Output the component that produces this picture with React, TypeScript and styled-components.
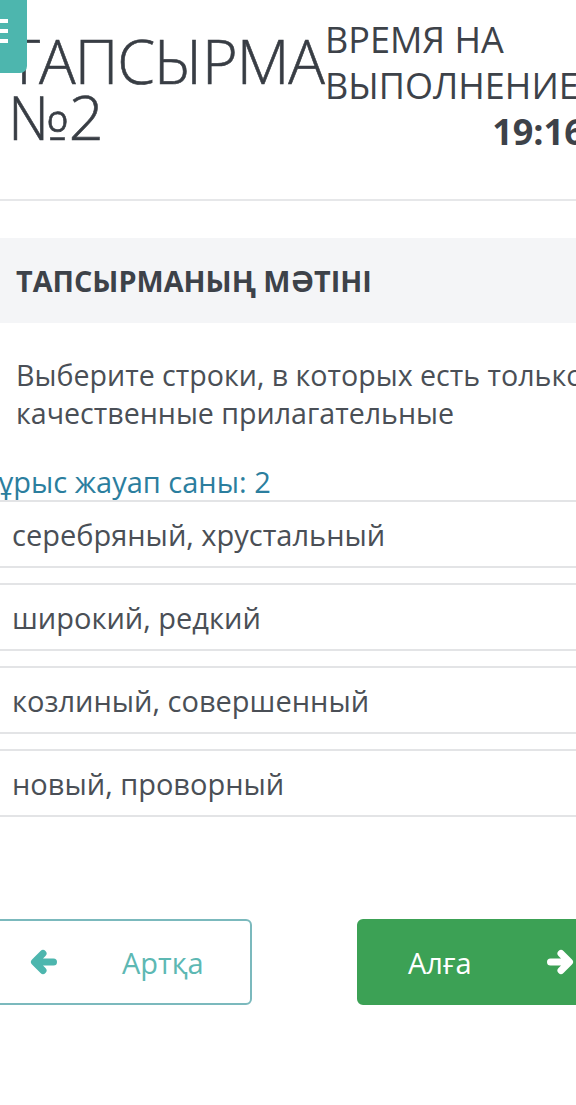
import styled, { createGlobalStyle } from "styled-components";

const GlobalStyle = createGlobalStyle`
  html, body {
    margin: 0;
    padding: 0;
    background: #ffffff;
    overflow: hidden;
  }
  body {
    font-family: "Open Sans", "Noto Sans", sans-serif;
    color: #3d4249;
  }
`;

// Styled
const Page = styled.div`
  position: relative;
  width: 576px;
  height: 1105px;
  overflow: hidden;
`;

const MenuTab = styled.div`
  position: absolute;
  top: 0;
  left: 0;
  width: 27px;
  height: 73px;
  background: #4db6ae;
  border-radius: 0 0 7px 0;
  display: flex;
  flex-direction: column;
  gap: 6px;
  padding-top: 19px;
  box-sizing: border-box;
  z-index: 2;
`;

const MenuLine = styled.span`
  display: block;
  width: 8px;
  height: 4px;
  background: #ffffff;
`;

const Header = styled.header`
  display: flex;
  align-items: flex-start;
  padding: 33px 0 0 8px;
  height: 201px;
  box-sizing: border-box;
  border-bottom: 2px solid #e6e7e9;
`;

const Title = styled.h1`
  margin: 0;
  width: 317px;
  flex-shrink: 0;
  font-size: 61px;
  font-weight: 300;
  line-height: 56px;
  color: #383d44;
  letter-spacing: -1px;
  -webkit-text-stroke: 0.6px #383d44;
`;

const Timer = styled.div`
  font-size: 36px;
  font-weight: 400;
  line-height: 46px;
  color: #3d4249;
  white-space: nowrap;
  margin-top: -16px;
`;

const TimerValue = styled.div`
  font-weight: 700;
  text-align: right;
  margin-right: -6px;
`;

const SectionHead = styled.div`
  margin-top: 37px;
  height: 85px;
  background: #f4f5f7;
  display: flex;
  align-items: center;
  padding-left: 16px;
  font-size: 28.8px;
  font-weight: 700;
  color: #3d4249;
`;

const Question = styled.p`
  margin: 33px 0 0 16px;
  font-size: 28.6px;
  line-height: 38px;
  color: #4a4f56;
  white-space: nowrap;
`;

const Hint = styled.div`
  margin: 33px 0 0 -21px;
  font-size: 29px;
  line-height: 34px;
  color: #2b7e9e;
`;

const Options = styled.div`
  display: flex;
  flex-direction: column;
  gap: 15px;
  margin-top: 1px;
`;

const Option = styled.div`
  height: 68px;
  box-sizing: border-box;
  border-top: 2px solid #e3e4e6;
  border-bottom: 2px solid #e3e4e6;
  display: flex;
  align-items: center;
  padding-left: 12px;
  font-size: 29px;
  color: #4a4f56;
`;

const Nav = styled.div`
  display: flex;
  margin-top: 102px;
  margin-left: -20px;
  gap: 105px;
`;

const NavButton = styled.button<{ $primary?: boolean }>`
  width: 272px;
  height: 86px;
  flex-shrink: 0;
  box-sizing: border-box;
  border-radius: 6px;
  border: 2px solid ${(p) => (p.$primary ? "#3ca155" : "#7bb9bd")};
  background: ${(p) => (p.$primary ? "#3ca155" : "#ffffff")};
  color: ${(p) => (p.$primary ? "#ffffff" : "#5db8b3")};
  font-family: "Open Sans", "Noto Sans", sans-serif;
  font-size: 29px;
  display: flex;
  align-items: center;
  padding: 0;
`;

const Icon = styled.span<{ $left: number; $right: number }>`
  display: flex;
  margin-left: ${(p) => p.$left}px;
  margin-right: ${(p) => p.$right}px;
`;

const Label = styled.span<{ $left?: number }>`
  margin-left: ${(p) => p.$left ?? 0}px;
`;
//styled

function Arrow({ dir, color }: { dir: "left" | "right"; color: string }) {
  return (
    <svg width="28" height="26" viewBox="0 0 28 26">
      <g transform={dir === "right" ? "translate(28 0) scale(-1 1)" : undefined}>
        <path
          d="M13 4.5 L4.5 13 L13 21.5 M5 13 H23.5"
          fill="none"
          stroke={color}
          strokeWidth="7"
          strokeLinecap="round"
          strokeLinejoin="round"
        />
      </g>
    </svg>
  );
}

const options = [
  "серебряный, хрустальный",
  "широкий, редкий",
  "козлиный, совершенный",
  "новый, проворный",
];

export default function App() {
  return (
    <>
      <GlobalStyle />
      <Page>
        <MenuTab>
          <MenuLine />
          <MenuLine />
          <MenuLine />
        </MenuTab>
        <Header>
          <Title>
            ТАПСЫРМА
            <br />
            №2
          </Title>
          <Timer>
            ВРЕМЯ НА
            <br />
            ВЫПОЛНЕНИЕ
            <TimerValue>19:16</TimerValue>
          </Timer>
        </Header>
        <SectionHead>ТАПСЫРМАНЫҢ МӘТІНІ</SectionHead>
        <Question>
          Выберите строки, в которых есть только
          <br />
          качественные прилагательные
        </Question>
        <Hint>Дұрыс жауап саны: 2</Hint>
        <Options>
          {options.map((o) => (
            <Option key={o}>{o}</Option>
          ))}
        </Options>
        <Nav>
          <NavButton>
            <Icon $left={48} $right={64}>
              <Arrow dir="left" color="#4db6ae" />
            </Icon>
            <Label>Артқа</Label>
          </NavButton>
          <NavButton $primary>
            <Label $left={49}>Алға</Label>
            <Icon $left={74} $right={0}>
              <Arrow dir="right" color="#ffffff" />
            </Icon>
          </NavButton>
        </Nav>
      </Page>
    </>
  );
}
